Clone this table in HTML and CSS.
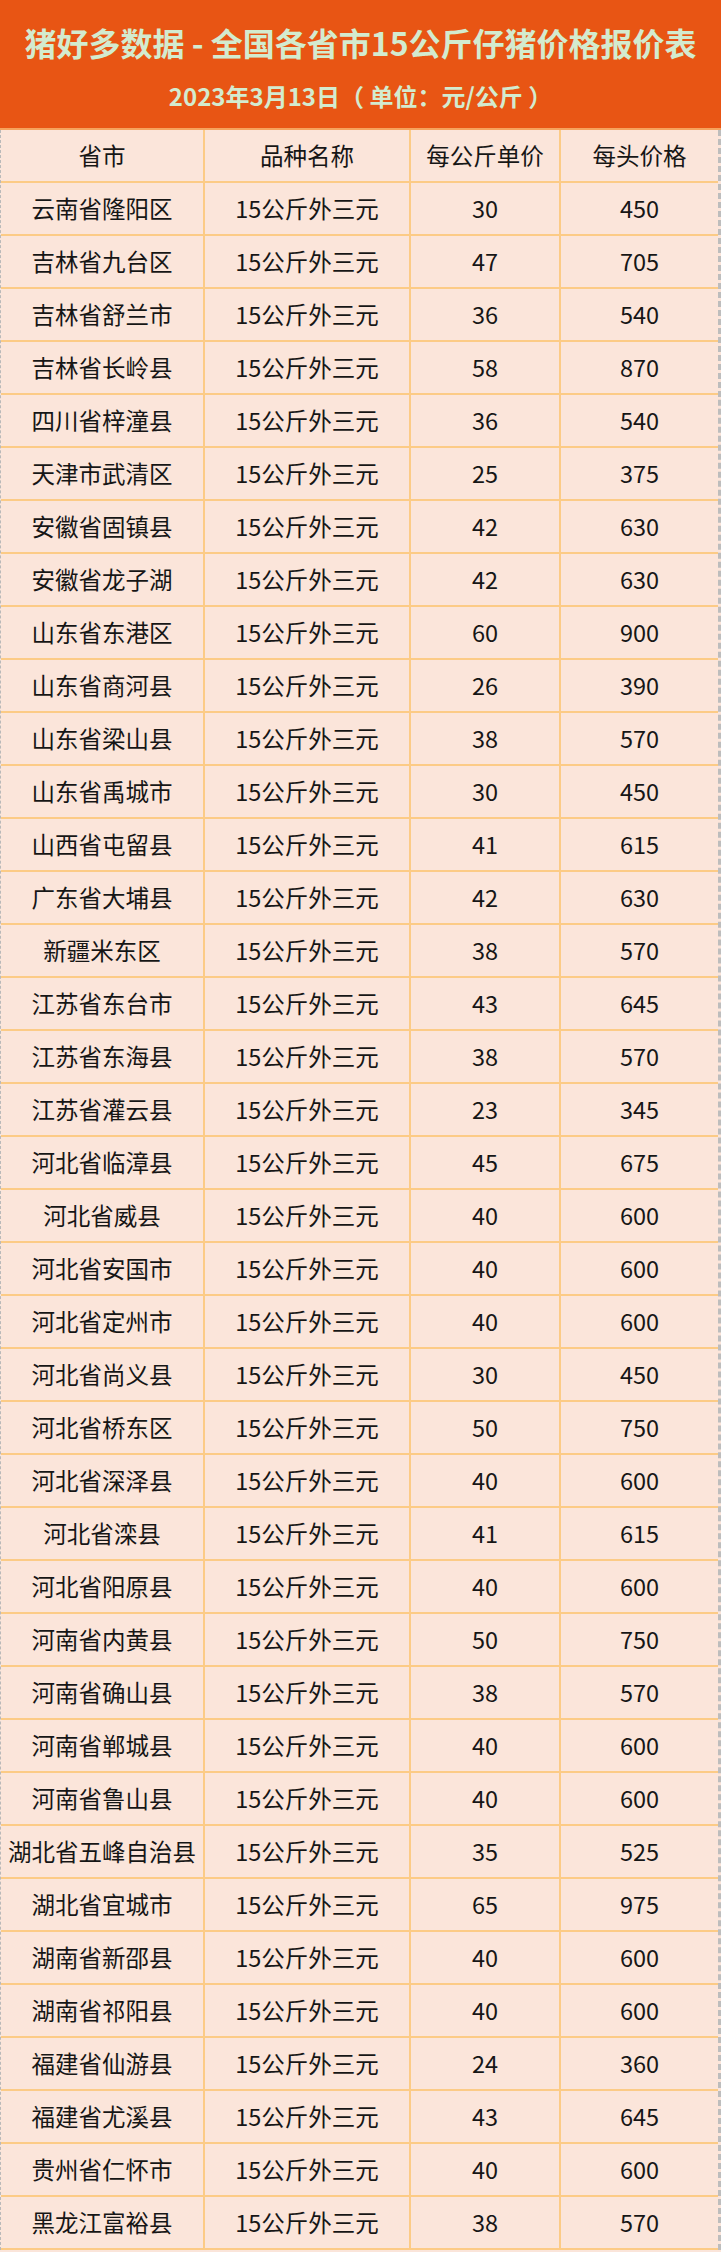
FILE: index.html
```html
<!DOCTYPE html>
<html lang="zh-CN">
<head>
<meta charset="utf-8">
<title>全国各省市15公斤仔猪价格报价表</title>
<link rel="stylesheet" href="styles.css">
</head>
<body>
<div class="page">
  <header class="banner">
    <h1 class="title">猪好多数据 - 全国各省市15公斤仔猪价格报价表</h1>
    <p class="subtitle">2023年3月13日（ 单位：元/公斤 ）</p>
  </header>
  <div class="table">
    <div class="row head"><div class="cell">省市</div><div class="cell">品种名称</div><div class="cell">每公斤单价</div><div class="cell">每头价格</div></div>
    <div class="row"><div class="cell">云南省隆阳区</div><div class="cell">15公斤外三元</div><div class="cell">30</div><div class="cell">450</div></div>
    <div class="row"><div class="cell">吉林省九台区</div><div class="cell">15公斤外三元</div><div class="cell">47</div><div class="cell">705</div></div>
    <div class="row"><div class="cell">吉林省舒兰市</div><div class="cell">15公斤外三元</div><div class="cell">36</div><div class="cell">540</div></div>
    <div class="row"><div class="cell">吉林省长岭县</div><div class="cell">15公斤外三元</div><div class="cell">58</div><div class="cell">870</div></div>
    <div class="row"><div class="cell">四川省梓潼县</div><div class="cell">15公斤外三元</div><div class="cell">36</div><div class="cell">540</div></div>
    <div class="row"><div class="cell">天津市武清区</div><div class="cell">15公斤外三元</div><div class="cell">25</div><div class="cell">375</div></div>
    <div class="row"><div class="cell">安徽省固镇县</div><div class="cell">15公斤外三元</div><div class="cell">42</div><div class="cell">630</div></div>
    <div class="row"><div class="cell">安徽省龙子湖</div><div class="cell">15公斤外三元</div><div class="cell">42</div><div class="cell">630</div></div>
    <div class="row"><div class="cell">山东省东港区</div><div class="cell">15公斤外三元</div><div class="cell">60</div><div class="cell">900</div></div>
    <div class="row"><div class="cell">山东省商河县</div><div class="cell">15公斤外三元</div><div class="cell">26</div><div class="cell">390</div></div>
    <div class="row"><div class="cell">山东省梁山县</div><div class="cell">15公斤外三元</div><div class="cell">38</div><div class="cell">570</div></div>
    <div class="row"><div class="cell">山东省禹城市</div><div class="cell">15公斤外三元</div><div class="cell">30</div><div class="cell">450</div></div>
    <div class="row"><div class="cell">山西省屯留县</div><div class="cell">15公斤外三元</div><div class="cell">41</div><div class="cell">615</div></div>
    <div class="row"><div class="cell">广东省大埔县</div><div class="cell">15公斤外三元</div><div class="cell">42</div><div class="cell">630</div></div>
    <div class="row"><div class="cell">新疆米东区</div><div class="cell">15公斤外三元</div><div class="cell">38</div><div class="cell">570</div></div>
    <div class="row"><div class="cell">江苏省东台市</div><div class="cell">15公斤外三元</div><div class="cell">43</div><div class="cell">645</div></div>
    <div class="row"><div class="cell">江苏省东海县</div><div class="cell">15公斤外三元</div><div class="cell">38</div><div class="cell">570</div></div>
    <div class="row"><div class="cell">江苏省灌云县</div><div class="cell">15公斤外三元</div><div class="cell">23</div><div class="cell">345</div></div>
    <div class="row"><div class="cell">河北省临漳县</div><div class="cell">15公斤外三元</div><div class="cell">45</div><div class="cell">675</div></div>
    <div class="row"><div class="cell">河北省威县</div><div class="cell">15公斤外三元</div><div class="cell">40</div><div class="cell">600</div></div>
    <div class="row"><div class="cell">河北省安国市</div><div class="cell">15公斤外三元</div><div class="cell">40</div><div class="cell">600</div></div>
    <div class="row"><div class="cell">河北省定州市</div><div class="cell">15公斤外三元</div><div class="cell">40</div><div class="cell">600</div></div>
    <div class="row"><div class="cell">河北省尚义县</div><div class="cell">15公斤外三元</div><div class="cell">30</div><div class="cell">450</div></div>
    <div class="row"><div class="cell">河北省桥东区</div><div class="cell">15公斤外三元</div><div class="cell">50</div><div class="cell">750</div></div>
    <div class="row"><div class="cell">河北省深泽县</div><div class="cell">15公斤外三元</div><div class="cell">40</div><div class="cell">600</div></div>
    <div class="row"><div class="cell">河北省滦县</div><div class="cell">15公斤外三元</div><div class="cell">41</div><div class="cell">615</div></div>
    <div class="row"><div class="cell">河北省阳原县</div><div class="cell">15公斤外三元</div><div class="cell">40</div><div class="cell">600</div></div>
    <div class="row"><div class="cell">河南省内黄县</div><div class="cell">15公斤外三元</div><div class="cell">50</div><div class="cell">750</div></div>
    <div class="row"><div class="cell">河南省确山县</div><div class="cell">15公斤外三元</div><div class="cell">38</div><div class="cell">570</div></div>
    <div class="row"><div class="cell">河南省郸城县</div><div class="cell">15公斤外三元</div><div class="cell">40</div><div class="cell">600</div></div>
    <div class="row"><div class="cell">河南省鲁山县</div><div class="cell">15公斤外三元</div><div class="cell">40</div><div class="cell">600</div></div>
    <div class="row"><div class="cell">湖北省五峰自治县</div><div class="cell">15公斤外三元</div><div class="cell">35</div><div class="cell">525</div></div>
    <div class="row"><div class="cell">湖北省宜城市</div><div class="cell">15公斤外三元</div><div class="cell">65</div><div class="cell">975</div></div>
    <div class="row"><div class="cell">湖南省新邵县</div><div class="cell">15公斤外三元</div><div class="cell">40</div><div class="cell">600</div></div>
    <div class="row"><div class="cell">湖南省祁阳县</div><div class="cell">15公斤外三元</div><div class="cell">40</div><div class="cell">600</div></div>
    <div class="row"><div class="cell">福建省仙游县</div><div class="cell">15公斤外三元</div><div class="cell">24</div><div class="cell">360</div></div>
    <div class="row"><div class="cell">福建省尤溪县</div><div class="cell">15公斤外三元</div><div class="cell">43</div><div class="cell">645</div></div>
    <div class="row"><div class="cell">贵州省仁怀市</div><div class="cell">15公斤外三元</div><div class="cell">40</div><div class="cell">600</div></div>
    <div class="row"><div class="cell">黑龙江富裕县</div><div class="cell">15公斤外三元</div><div class="cell">38</div><div class="cell">570</div></div>
  </div>
</div>
</body>
</html>
```

FILE: styles.css
```css
* {
  box-sizing: border-box;
}

html, body {
  margin: 0;
  padding: 0;
  background: #fbe5da;
}

body {
  width: 721px;
  font-family: "Noto Sans CJK SC", "Noto Sans", sans-serif;
  color: #161616;
}

.page {
  width: 721px;
  min-height: 2252px;
  background: #fbe5da;
}

.banner {
  height: 130px;
  background: #e85514;
  border-bottom: 2px solid #f6a25c;
  display: flex;
  flex-direction: column;
  align-items: center;
  padding-top: 22px;
}

.title {
  margin: 0;
  font-size: 32px;
  line-height: 40px;
  font-weight: 700;
  color: #d3ebcf;
  white-space: nowrap;
}

.subtitle {
  margin: 19px 0 0;
  font-size: 24px;
  line-height: 30px;
  font-weight: 700;
  color: #d3ebcf;
  white-space: nowrap;
}

.table {
  border-left: 1px dashed #b9b9b9;
  border-right: 3px dashed #bdbdbd;
}

.row {
  display: grid;
  grid-template-columns: 204px 206px 150px 157px;
  height: 53px;
  border-bottom: 2px solid #fccb86;
}

.cell {
  display: flex;
  align-items: center;
  justify-content: center;
  font-size: 23.5px;
  line-height: 1;
  white-space: nowrap;
  border-right: 2px solid #fccb86;
}

.cell:last-child {
  border-right: none;
}
```
